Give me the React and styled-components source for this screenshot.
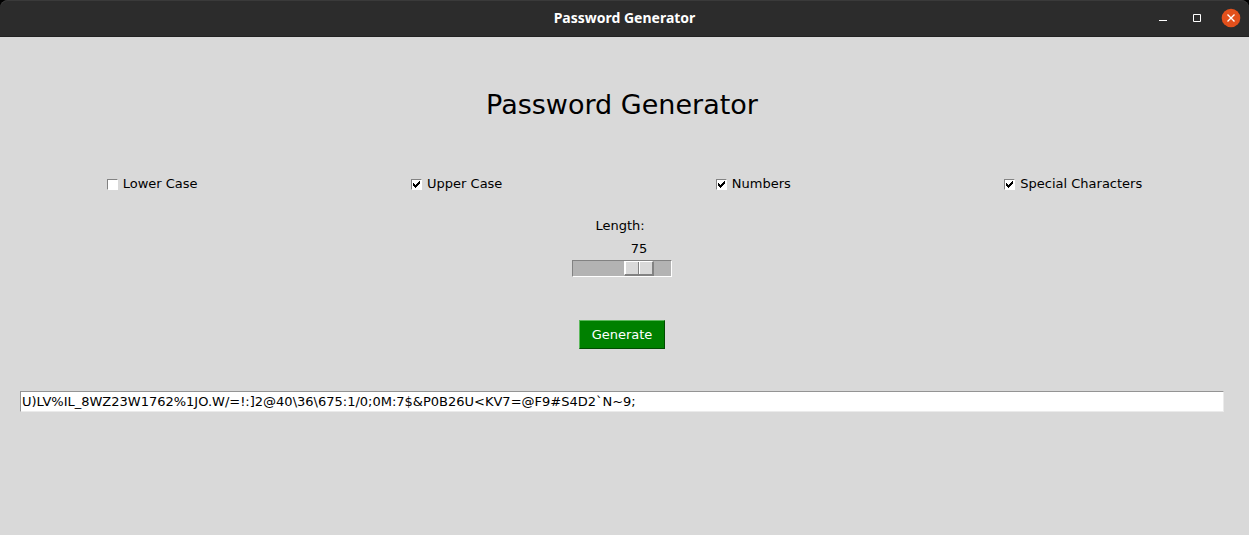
import React, { useState } from "react";
import styled, { createGlobalStyle } from "styled-components";

const GlobalStyle = createGlobalStyle`
  * { box-sizing: border-box; }
  body { margin: 0; background: #d9d9d9; }
  body, button, input { font-family: "DejaVu Sans", sans-serif; font-size: 13px; line-height: 16px; color: #000; }
`;

const Frame = styled.div`
  background: #000;
`;

const TitleBar = styled.header`
  display: grid;
  grid-template-columns: 1fr auto 1fr;
  align-items: center;
  height: 37px;
  padding-right: 8px;
  background: #2c2c2c;
  border-bottom: 1px solid #222;
  border-radius: 8px 8px 0 0;
  box-shadow: inset 0 1px #3a3a3a;
`;

const WindowTitle = styled.span`
  grid-column: 2;
  padding-left: 8px;
  font: bold 14px/22px "Noto Sans", sans-serif;
  color: #fff;
`;

const WindowControls = styled.div`
  display: flex;
  justify-content: flex-end;
  align-items: center;
  gap: 14px;
`;

const WindowButton = styled.button`
  display: block;
  width: 20px;
  height: 20px;
  padding: 0;
  border: 0;
  background: transparent;
  svg { display: block; }
`;

const Panel = styled.main`
  display: flex;
  flex-direction: column;
  align-items: center;
  padding: 48px 25px 24px 20px;
  background: #d9d9d9;
`;

const Heading = styled.h1`
  margin: 0;
  font-size: 27px;
  line-height: 40px;
  font-weight: 400;
`;

const Options = styled.div`
  display: flex;
  justify-content: space-around;
  align-self: stretch;
  margin: 51px -25px 0 -20px;
`;

const Option = styled.label`
  display: flex;
  align-items: center;
  gap: 5px;
`;

const CheckCell = styled.span`
  position: relative;
  width: 11px;
  height: 11px;
  svg { position: absolute; top: 2px; left: 2px; pointer-events: none; }
`;

const CheckInput = styled.input`
  appearance: none;
  display: block;
  width: 11px;
  height: 11px;
  margin: 0;
  background: #fff;
  border: 1px solid;
  border-color: #828282 #fff #fff #828282;
`;

const LengthField = styled.div`
  display: flex;
  flex-direction: column;
  width: 100px;
  margin-top: 26px;
`;

const LengthLabel = styled.label`
  padding-right: 4px;
  text-align: center;
`;

const LengthValue = styled.output`
  width: 30px;
  margin-top: 7px;
  text-align: center;
`;

const Slider = styled.input`
  appearance: none;
  width: 100%;
  height: 17px;
  margin: 3px 0 0;
  background: #b3b3b3;
  border: 1px solid;
  border-color: #828282 #fff #fff #828282;
  padding: 0 1px;
  &::-webkit-slider-thumb {
    appearance: none;
    width: 30px;
    height: 15px;
    border: solid;
    border-width: 1px 2px 2px 1px;
    border-color: #fff #828282 #828282 #fff;
    background: linear-gradient(90deg, #fff 1px, #d9d9d9 1px 13px, #828282 13px 14px, #fff 14px 15px, #d9d9d9 15px);
  }
`;

const GenerateButton = styled.button`
  height: 29px;
  margin-top: 43px;
  padding: 0 12px;
  border: 1px solid;
  border-color: #5cb85c #004c00 #004c00 #5cb85c;
  background: #008000;
  color: #fff;
`;

const PasswordInput = styled.input`
  align-self: stretch;
  height: 21px;
  margin-top: 42px;
  padding: 0 1px;
  background: #fff;
  border: 1px solid;
  border-color: #949494 #ebebeb #ebebeb #949494;
  border-radius: 0;
`;

const TRAVEL = 66;

const POOLS = {
  "Lower Case": "abcdefghijklmnopqrstuvwxyz",
  "Upper Case": "ABCDEFGHIJKLMNOPQRSTUVWXYZ",
  Numbers: "0123456789",
  "Special Characters": "!@#$%&*()_=/\\:;<>[]`~.",
};

function CheckOption({ name, checked, onChange }) {
  return (
    <Option>
      <CheckCell>
        <CheckInput type="checkbox" checked={checked} onChange={onChange} />
        {checked && (
          <svg width="7" height="7" viewBox="0 0 7 7" aria-hidden="true" shapeRendering="crispEdges">
            <path d="M0 2h1v1h1v1h1v-1h1v-1h1v-1h1v-1h1v3h-1v1h-1v1h-1v1h-1v1h-1v-1h-1v-1h-1z" fill="#000" />
          </svg>
        )}
      </CheckCell>
      {name}
    </Option>
  );
}

export default function App() {
  const [enabled, setEnabled] = useState({
    "Lower Case": false,
    "Upper Case": true,
    Numbers: true,
    "Special Characters": true,
  });
  const [length, setLength] = useState(75);
  const [password, setPassword] = useState(
    "U)LV%IL_8WZ23W1762%1JO.W/=!:]2@40\\36\\675:1/0;0M:7$&P0B26U<KV7=@F9#S4D2`N~9;"
  );

  const generate = () => {
    const pool = Object.keys(POOLS).filter((k) => enabled[k]).map((k) => POOLS[k]).join("");
    setPassword(
      pool ? Array.from({ length }, () => pool[Math.floor(Math.random() * pool.length)]).join("") : ""
    );
  };

  return (
    <>
      <GlobalStyle />
      <Frame>
        <TitleBar>
          <WindowTitle>Password Generator</WindowTitle>
          <WindowControls>
            <WindowButton type="button" aria-label="Minimize">
              <svg width="20" height="20"><path d="M6 12.5h8" stroke="#fff" /></svg>
            </WindowButton>
            <WindowButton type="button" aria-label="Maximize">
              <svg width="20" height="20"><path d="M6.5 6.5h7v7h-7z" stroke="#fff" fill="none" /></svg>
            </WindowButton>
            <WindowButton type="button" aria-label="Close">
              <svg width="20" height="20">
                <circle cx="10" cy="10" r="9.3" fill="#e2501c" />
                <path d="M6.5 6.5l7 7m0-7l-7 7" stroke="#fff" strokeWidth="1.4" />
              </svg>
            </WindowButton>
          </WindowControls>
        </TitleBar>
        <Panel>
          <Heading>Password Generator</Heading>
          <Options>
            {Object.keys(POOLS).map((name) => (
              <CheckOption
                key={name}
                name={name}
                checked={enabled[name]}
                onChange={() => setEnabled({ ...enabled, [name]: !enabled[name] })}
              />
            ))}
          </Options>
          <LengthField>
            <LengthLabel htmlFor="length">Length:</LengthLabel>
            <LengthValue htmlFor="length" style={{ marginLeft: Math.round(2 + (TRAVEL * length) / 100) }}>
              {length}
            </LengthValue>
            <Slider
              id="length"
              type="range"
              min="0"
              max="100"
              value={length}
              onChange={(e) => setLength(Number(e.target.value))}
            />
          </LengthField>
          <GenerateButton type="button" onClick={generate}>Generate</GenerateButton>
          <PasswordInput
            aria-label="Generated password"
            value={password}
            onChange={(e) => setPassword(e.target.value)}
          />
        </Panel>
      </Frame>
    </>
  );
}
